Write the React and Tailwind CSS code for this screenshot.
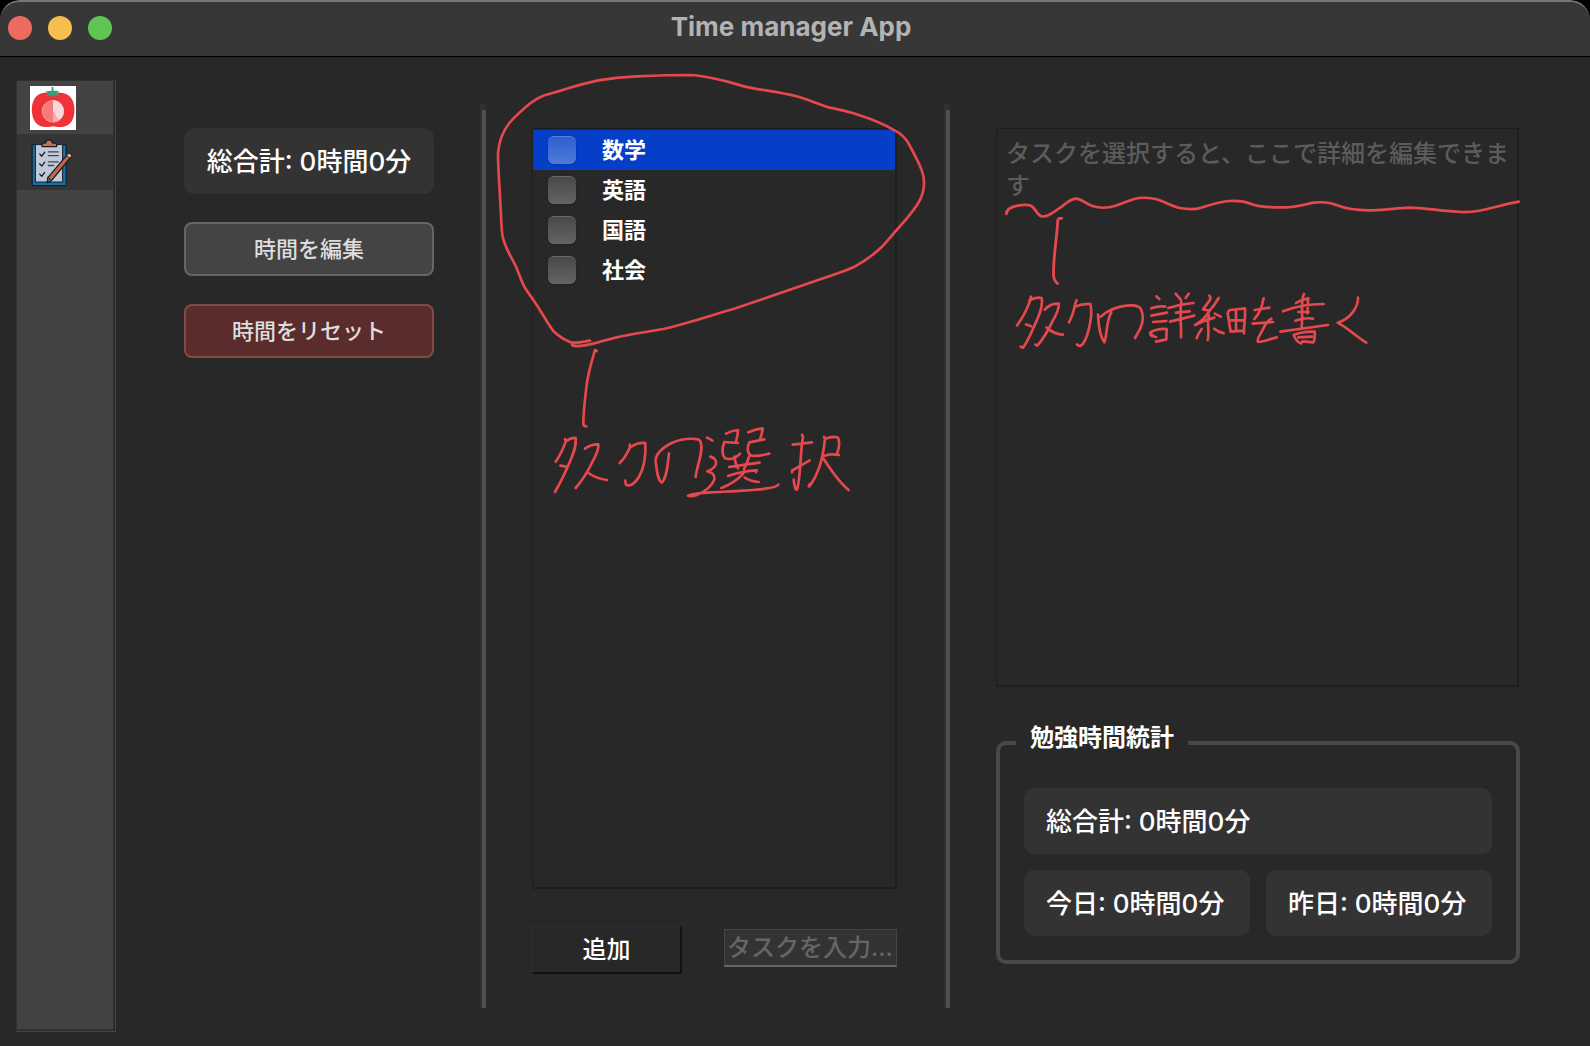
import { useState } from "react";

const SUBJECTS = ["数学", "英語", "国語", "社会"];

function TomatoIcon() {
  return (
    <svg viewBox="18 18 138 132" className="h-11 w-[46px]" aria-hidden="true">
      <rect x="18" y="18" width="138" height="132" fill="#fff" />
      <path
        d="M87 43C70 35 48 36 36 50C25 62 22 82 24 98C26 119 37 137 58 140C70 142 80 141 87 139C95 141 107 142 119 140C139 136 149 119 151 98C153 80 149 61 138 50C126 37 103 35 87 43Z"
        fill="#ee3237"
      />
      <path
        d="M83 21L88 21L89 33C96 31 103 32 108 37C102 37 98 38 96 41L108 48C102 49 96 48 92 45L93 51L86 45L78 51L79 44C74 48 68 49 62 48C68 46 72 43 75 40C71 37 66 37 61 39C66 33 77 31 83 33Z"
        fill="#3a9d78"
      />
      <circle cx="87" cy="94" r="33" fill="#f6797c" />
      <circle cx="87" cy="94" r="32" fill="none" stroke="#fbb6b8" strokeWidth="3" strokeDasharray="5 2" />
      <path d="M87 61A33 33 0 0 1 104 122L87 94Z" fill="#fcd5d7" />
      <path d="M87 94L104 122A33 33 0 0 1 87 127Z" fill="#f9a9ac" />
    </svg>
  );
}

function ClipboardIcon() {
  return (
    <svg viewBox="22 172 126 148" className="h-[49px] w-[42px]" fill="none" strokeLinecap="round" strokeLinejoin="round" aria-hidden="true">
      <rect x="25" y="192" width="103" height="124" rx="3" fill="#1a6f9e" stroke="#14202f" strokeWidth="4" />
      <path d="M36 192H117V305H36Z" fill="#c3c8d6" stroke="#14202f" strokeWidth="3" />
      <path d="M55 198V190Q55 187 59 187H66C67 174 85 174 86 187H94Q99 188 99 192V198Z" fill="#c9704a" stroke="#14202f" strokeWidth="4" />
      <path d="M48 220L54 227L63 215M48 250L54 257L63 245M48 281L54 288L63 276" stroke="#14202f" strokeWidth="4" />
      <path d="M74 214H104M74 225H104M74 244H104M74 255H90" stroke="#3c4456" strokeWidth="4" />
      <path d="M134 219Q144 217 144 227L84 300L71 307L73 291Z" fill="#c8663f" stroke="#14202f" strokeWidth="4" />
      <path d="M134 219Q144 217 144 227L139 233L129 225Z" fill="#dfb3a8" stroke="#14202f" strokeWidth="3" />
      <path d="M73 291L84 300L71 307Z" fill="#2a7596" stroke="#14202f" strokeWidth="3" />
    </svg>
  );
}

const inkClass = "pointer-events-none absolute top-0 left-0 h-[904px] overflow-visible";

function TaskSelectionNote() {
  return (
    <svg viewBox="486 104 458 904" className={`${inkClass} w-[458px]`} fill="none" stroke="#e5484d" strokeWidth="8" strokeLinecap="round" strokeLinejoin="round" aria-label="タスクの選択" role="img">
      <g transform="translate(470 50) scale(0.33333)">
        <path d="M360 872C340 875 322 881 302 877C285 870 265 858 250 843C232 820 215 785 190 750C175 727 165 718 156 695C148 675 142 658 134 642C120 614 105 592 98 560C93 530 94 500 91 460C89 410 84 360 84 310C86 280 98 245 118 219C138 195 150 187 165 173C185 155 200 145 220 137C240 130 265 125 290 116C320 107 350 98 385 91C420 85 460 81 500 79C550 77 610 75 660 75C700 76 735 87 770 94C795 100 810 107 835 112C880 121 930 126 980 139C1015 149 1045 163 1080 173C1110 180 1130 183 1155 191C1200 205 1240 220 1275 242C1290 250 1302 260 1311 273C1322 290 1330 308 1341 329C1352 350 1362 370 1362 395C1363 420 1357 440 1343 462C1325 490 1300 518 1280 540C1262 560 1250 575 1235 591C1208 617 1180 636 1150 652C1110 670 1060 684 1010 702C930 729 860 754 790 777C720 797 650 822 580 837C530 846 480 853 440 862C410 869 390 876 370 881C345 887 318 892 306 885" />
      </g>
      <g transform="translate(530 340) scale(0.33333)">
        <path d="M200 33L195 30C185 65 175 95 170 135C166 170 160 210 160 252Q161 259 169 259" />
        <path d="M105 297L107 305C100 325 90 347 77 365M107 305C117 297 128 293 137 294C139 320 131 338 122 360C108 393 93 425 75 456M91 377L109 380" />
        <path d="M165 326C177 317 190 312 205 313C207 330 198 345 190 360C176 390 160 418 137 444M175 399C193 411 212 418 231 420" />
        <path d="M299 314L300 322C292 340 282 357 269 369M300 322C315 312 333 307 346 309C348 350 342 385 326 412C314 431 302 440 289 435C286 432 286 427 286 422" />
        <path d="M417 340C413 370 412 410 396 427C384 425 381 395 377 365C375 345 395 324 425 309C450 298 480 294 505 298C519 305 514 340 507 365C502 385 498 398 497 411" />
        <path d="M531 293Q541 296 547 302M541 350C553 353 561 362 557 374C553 385 543 390 532 394C546 396 555 405 553 418C545 440 520 457 500 465C490 469 477 469 474 467C490 460 515 458 545 457C600 454 660 452 705 446C725 444 740 442 745 434" />
        <path d="M588 281C600 275 612 271 624 270C624 285 620 297 617 309M583 306L624 309M583 306C576 325 576 345 585 355C600 360 617 355 630 341" />
        <path d="M655 277C670 270 685 266 698 265C697 278 693 290 690 299M658 307L703 298M658 307C650 325 652 342 665 347C685 350 700 345 718 341" />
        <path d="M613 350Q616 372 624 385M657 350Q652 370 642 387M597 381C625 377 660 372 689 368M594 408C625 397 653 392 680 391L678 396M640 401C622 420 602 434 574 444M644 413Q664 425 686 426" />
        <path d="M816 284L819 290C810 340 813 400 802 447C798 455 793 440 791 419M788 314L846 307M786 397V392L839 361" />
        <path d="M882 291L885 296C880 350 868 400 838 439C835 440 837 434 840 432M885 296C900 291 915 288 924 293C931 307 927 325 921 341M884 347C897 342 912 342 927 345M880 355C903 390 925 425 956 450" />
      </g>
    </svg>
  );
}

function TaskDetailsNote() {
  return (
    <svg viewBox="950 104 640 904" className={`${inkClass} w-[640px]`} fill="none" stroke="#e5484d" strokeWidth="8" strokeLinecap="round" strokeLinejoin="round" aria-label="タスクの詳細を書く" role="img">
      <g transform="translate(980 110) scale(0.357 0.33333)">
        <path d="M74 312C74 296 90 290 105 287C120 284 135 284 143 287C155 295 160 315 172 319C190 323 205 306 225 293C240 281 253 267 268 266C285 267 297 282 315 288C335 295 360 294 380 287C405 279 425 267 445 264C465 262 480 263 495 268C520 276 540 290 560 294C580 298 600 300 620 293C645 285 670 275 700 273C725 271 742 274 760 282C785 293 820 292 850 292C880 293 910 283 935 278C960 275 980 277 1000 286C1030 299 1060 302 1100 301C1140 301 1165 294 1200 293C1250 293 1290 304 1350 306C1405 308 1440 289 1509 275" />
        <path d="M229 325H221L218 330C215 390 205 440 206 495Q206 510 217 521" />
      </g>
      <g transform="translate(1005 280) scale(0.33333)">
        <path d="M78 50L74 65C65 90 52 115 36 136M73 62C87 53 98 51 110 54C115 80 100 110 88 138C76 165 65 190 54 203L47 200M63 133L78 139" />
        <path d="M119 89C130 76 145 70 161 71C163 90 152 108 142 125C130 150 112 180 97 197L91 194M124 142C138 155 155 164 174 164" />
        <path d="M215 61L211 70C207 90 201 112 192 127M211 80C226 73 240 71 256 72C262 95 258 120 252 145C246 170 238 192 226 198Q220 198 216 193" />
        <path d="M279 104C280 130 286 170 298 187C307 170 302 125 319 97M287 110C310 90 335 80 365 77C390 74 405 78 409 90C417 110 415 125 406 145Q398 160 390 174" />
        <path d="M454 49L463 57M439 85Q460 77 481 80M439 107L486 98M444 126L484 123M436 157Q458 145 485 147L484 178L453 185M436 157Q443 170 453 171M436 157Q434 165 442 168" />
        <path d="M512 41L527 59M551 41L542 54M490 84Q527 72 565 69M513 98L554 94M495 125L568 107M529 65C523 100 530 140 528 172" />
      </g>
      <g transform="translate(1185 280) scale(0.33333)">
        <path d="M73 47Q79 52 74 61L54 88M101 54C92 70 85 80 74 91M54 88Q65 92 75 90C65 108 50 125 30 135M89 101Q101 107 107 110M30 135Q60 120 88 113M72 106C64 130 75 155 68 180M50 147Q39 160 35 175M88 146Q98 155 116 160" />
        <path d="M131 93L128 100L137 155M135 90L180 85C182 110 176 135 177 160M153 92V153M137 121H174M137 155L174 152" />
        <path d="M236 55L234 62C231 83 224 100 208 117M209 90L253 83M203 131L264 126M259 116C245 122 237 140 230 155C222 170 214 180 219 186C238 186 255 177 275 172" />
        <path d="M357 42L354 50C348 75 354 105 350 142M333 69Q350 58 370 55L369 62M294 94Q350 72 416 72M369 62L367 100M340 96H371M331 122Q360 112 384 116M286 155Q350 146 429 135M326 165C332 180 340 189 349 190M326 165Q355 153 389 155Q391 175 385 187L352 184M340 172L381 170" />
        <path d="M519 53C520 80 497 117 458 128C485 142 515 170 544 188" />
      </g>
    </svg>
  );
}

function TimeCard({ children, className = "" }) {
  return (
    <p className={`flex h-[66px] items-center rounded-[10px] bg-[#333333] px-[22px] pt-px text-[26px] font-medium whitespace-nowrap text-white ${className}`}>
      {children}
    </p>
  );
}

function TaskRow({ name, selected, onSelect }) {
  return (
    <li onClick={onSelect} className={selected ? "bg-[#053fc8]" : ""}>
      <label className="flex h-10 items-center gap-[26px] pl-[15px] text-[22px] font-bold text-white">
        <input
          type="checkbox"
          className={`size-7 appearance-none rounded-md border-t shadow-sm bg-linear-to-b ${
            selected ? "border-[#5f83dc] from-[#2f5fd0] to-[#4f7ad9]" : "border-[#6a6a6a] from-[#494949] to-[#646464]"
          }`}
        />
        {name}
      </label>
    </li>
  );
}

function Divider() {
  return (
    <div className="flex flex-col bg-[#303030]">
      <div className="h-[6px]" />
      <div className="ml-[2px] flex-1 bg-[#505050]" />
    </div>
  );
}

export default function App() {
  const [selected, setSelected] = useState(0);
  return (
    <div className="bg-black">
      <div className="flex h-screen min-h-[900px] flex-col overflow-hidden rounded-t-[20px] bg-[#282828] font-[Inter,'Noto_Sans_CJK_JP',sans-serif]">
        <header className="grid h-[57px] shrink-0 grid-cols-[1fr_auto_1fr] items-center rounded-t-[20px] border-t-2 border-b border-t-[#777777] border-b-black bg-[#373737] pr-4 pb-[2px] pl-2">
          <div className="flex gap-4">
            <button aria-label="閉じる" className="size-6 rounded-full bg-[#ed6a5f]" />
            <button aria-label="最小化" className="size-6 rounded-full bg-[#f5bf4f]" />
            <button aria-label="拡大" className="size-6 rounded-full bg-[#61c554]" />
          </div>
          <h1 className="pb-[2px] text-[26px] leading-8 font-bold text-[#b3b3b3]">Time manager App</h1>
        </header>

        <main className="flex min-h-0 flex-1">
          <nav className="mt-[23px] mb-[14px] ml-4 w-[100px] shrink-0 border-r border-b border-[#444444]">
            <div className="mr-px flex h-full flex-col border border-b-2 border-[#303030] bg-[#434343]">
              <button aria-label="ポモドーロ" className="flex h-[53px] items-center pl-[13px]">
                <TomatoIcon />
              </button>
              <button aria-label="タスク" className="flex h-14 items-center bg-[#353535] pl-[14px]">
                <ClipboardIcon />
              </button>
            </div>
          </nav>

          <div className="mt-[47px] mb-[38px] grid flex-1 grid-cols-[364fr_6px_458fr_6px_640fr]">
            <section className="flex flex-col gap-7 pt-6 pr-[46px] pl-[68px]">
              <TimeCard className="justify-center">総合計: 0時間0分</TimeCard>
              <button className="h-[54px] rounded-lg border-2 border-[#666666] bg-[#444444] text-[22px] font-medium text-[#dddddd]">
                時間を編集
              </button>
              <button className="h-[54px] rounded-lg border-2 border-[#834a4a] bg-[#5a2c2c] text-[22px] font-medium text-[#dddddd]">
                時間をリセット
              </button>
            </section>

            <Divider />

            <section className="relative flex flex-col pt-6 pr-[47px] pb-[34px] pl-[46px]">
              <ul className="flex-1 border border-r-2 border-b-2 border-[#1e1e1e] pt-px">
                {SUBJECTS.map((name, i) => (
                  <TaskRow key={name} name={name} selected={i === selected} onSelect={() => setSelected(i)} />
                ))}
              </ul>
              <div className="mt-[37px] flex items-center justify-between gap-[42px]">
                <button className="h-12 w-[150px] shrink-0 border border-r-2 border-b-2 border-t-[#303030] border-r-[#111111] border-b-[#111111] border-l-[#303030] pt-px text-2xl font-medium text-white">
                  追加
                </button>
                <input
                  type="text"
                  aria-label="タスクを入力"
                  placeholder="タスクを入力..."
                  className="mb-1 h-[38px] w-full min-w-0 border border-b-2 border-[#444444] border-b-[#666666] bg-[#333333] px-[2px] text-2xl font-medium text-white placeholder:text-[#666666]"
                />
              </div>
              <TaskSelectionNote />
            </section>

            <Divider />

            <section className="relative flex flex-col pt-6 pr-[71px] pb-11 pl-[46px]">
              <textarea
                aria-label="タスクの詳細"
                placeholder="タスクを選択すると、ここで詳細を編集できます"
                className="min-h-0 flex-1 resize-none border border-r-2 border-b-2 border-[#1e1e1e] pt-[9px] pr-1 pb-2 pl-[9px] text-2xl leading-8 font-medium text-white placeholder:text-[#5c5c5c]"
              />
              <fieldset className="mt-[34px] -mr-px rounded-[10px] border-4 border-[#484848] px-6 pt-[23px] pb-6">
                <legend className="ml-[-8px] px-[14px] pb-[10px] text-2xl leading-[34px] font-bold text-white">勉強時間統計</legend>
                <div className="grid grid-cols-2 gap-4">
                  <TimeCard className="col-span-2">総合計: 0時間0分</TimeCard>
                  <TimeCard>今日: 0時間0分</TimeCard>
                  <TimeCard>昨日: 0時間0分</TimeCard>
                </div>
              </fieldset>
              <TaskDetailsNote />
            </section>
          </div>
        </main>
      </div>
    </div>
  );
}
